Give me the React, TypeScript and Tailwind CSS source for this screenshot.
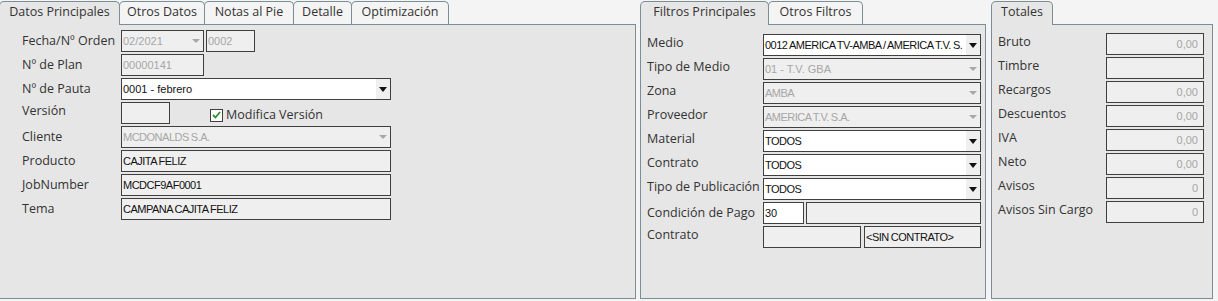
import clsx from "clsx";
import type { ReactNode } from "react";

const NARROW = "font-['Liberation_Sans',Arial,sans-serif] tracking-[-0.5px] [word-spacing:-0.5px]";
const PLAIN = "font-['Liberation_Sans',Arial,sans-serif]";

type BoxProps = {
  className: string;
  text?: string;
  white?: boolean;
  muted?: boolean;
  narrow?: boolean;
  right?: boolean;
  arrow?: "dark" | "light";
};

function Box({ className, text, white, muted, narrow, right, arrow }: BoxProps) {
  return (
    <div
      className={clsx(
        "flex h-[22px] shrink-0 items-center border border-[#3f3f3f]",
        white ? "bg-white" : "bg-[#efefef]",
        className,
      )}
    >
      <span
        className={clsx(
          "flex-1 overflow-hidden whitespace-nowrap pl-px text-[11px] leading-none",
          narrow ? NARROW : PLAIN,
          muted ? "text-[#a6a6a6]" : "text-[#111]",
          right && "pr-[5px] text-right",
        )}
      >
        {text}
      </span>
      {arrow === "dark" && (
        <span className="flex h-full w-[14px] items-center justify-center bg-[#efefef]">
          <svg width="8" height="5" viewBox="0 0 8 5">
            <polygon points="0,0 8,0 4,5" fill="#111" />
          </svg>
        </span>
      )}
      {arrow === "light" && (
        <span className="flex h-full w-[14px] items-center justify-center">
          <svg width="8" height="4" viewBox="0 0 8 4">
            <polygon points="0,0 8,0 4,4" fill="#a8a8a8" />
          </svg>
        </span>
      )}
    </div>
  );
}

function Row({ label, labelW, children, lift }: { label: string; labelW: string; children: ReactNode; lift?: boolean }) {
  return (
    <div className="flex h-[22px] items-center">
      <span className={clsx("shrink-0 whitespace-nowrap", labelW, lift && "-mt-[3px]")}>{label}</span>
      {children}
    </div>
  );
}

type Tab = { name: string; w: string; active?: boolean };

function Panel({ tabs, className, bodyClass, children }: { tabs: Tab[]; className: string; bodyClass: string; children: ReactNode }) {
  return (
    <div className={clsx("flex shrink-0 flex-col", className)}>
      <div className="flex h-[23px] items-start">
        {tabs.map((t, i) => (
          <div
            key={t.name}
            className={clsx(
              "flex items-center justify-center rounded-t-[5px] border border-b-0 border-[#7b8d96] pb-[2px]",
              i > 0 && "-ml-px",
              t.active ? "relative z-10 h-[24px] bg-[#e6e6e6]" : "h-[23px] bg-[#f4f4f4]",
              t.w,
            )}
          >
            {t.name}
          </div>
        ))}
      </div>
      <div className={clsx("flex h-[275px] flex-col gap-[2px] border border-[#7b8d96] bg-[#e6e6e6]", bodyClass)}>
        {children}
      </div>
    </div>
  );
}

function CheckBox() {
  return (
    <span className="flex h-[13px] w-[13px] items-center justify-center border border-[#3f3f3f] bg-white">
      <svg width="9" height="8" viewBox="0 0 9 8">
        <path d="M1 4 L3.5 6.5 L8 1" fill="none" stroke="#2f8f2f" strokeWidth="1.8" />
      </svg>
    </span>
  );
}

const MIDDLE = [
  { label: "Medio", text: "0012 AMERICA TV-AMBA / AMERICA T.V. S.", white: true, arrow: "dark" as const, narrow: true },
  { label: "Tipo de Medio", text: "01 - T.V. GBA", muted: true, arrow: "light" as const },
  { label: "Zona", text: "AMBA", muted: true, arrow: "light" as const, narrow: true },
  { label: "Proveedor", text: "AMERICA T.V. S.A.", muted: true, arrow: "light" as const, narrow: true },
  { label: "Material", text: "TODOS", white: true, arrow: "dark" as const, narrow: true },
  { label: "Contrato", text: "TODOS", white: true, arrow: "dark" as const, narrow: true },
  { label: "Tipo de Publicación", text: "TODOS", white: true, arrow: "dark" as const, narrow: true },
];

const TOTALES = [
  { label: "Bruto", value: "0,00" },
  { label: "Timbre", value: "" },
  { label: "Recargos", value: "0,00" },
  { label: "Descuentos", value: "0,00" },
  { label: "IVA", value: "0,00" },
  { label: "Neto", value: "0,00" },
  { label: "Avisos", value: "0" },
  { label: "Avisos Sin Cargo", value: "0" },
];

export default function App() {
  return (
    <div className="flex h-[301px] w-[1218px] bg-[#f4f4f4] pt-px font-['Open_Sans',sans-serif] text-[12.5px] text-[#333]">
      <Panel
        className="-ml-px mr-[4px] w-[637px]"
        bodyClass="pl-[22px] pt-[5px]"
        tabs={[
          { name: "Datos Principales", w: "w-[121px]", active: true },
          { name: "Otros Datos", w: "w-[86px]" },
          { name: "Notas al Pie", w: "w-[90px]" },
          { name: "Detalle", w: "w-[59px]" },
          { name: "Optimización", w: "w-[98px]" },
        ]}
      >
        <Row label="Fecha/Nº Orden" labelW="w-[99px]">
          <Box className="w-[83px]" text="02/2021" muted arrow="light" />
          <Box className="ml-[2px] w-[49px]" text="0002" muted />
        </Row>
        <Row label="Nº de Plan" labelW="w-[99px]">
          <Box className="w-[83px]" text="00000141" muted />
        </Row>
        <Row label="Nº de Pauta" labelW="w-[99px]">
          <Box className="w-[270px]" text="0001 - febrero" white arrow="dark" />
        </Row>
        <Row label="Versión" labelW="w-[99px]" lift>
          <Box className="w-[49px]" />
          <label className="ml-[40px] mt-[4px] flex items-center gap-[3px]">
            <CheckBox />
            <span>Modifica Versión</span>
          </label>
        </Row>
        <Row label="Cliente" labelW="w-[99px]">
          <Box className="w-[270px]" text="MCDONALDS S.A." muted narrow arrow="light" />
        </Row>
        <Row label="Producto" labelW="w-[99px]">
          <Box className="w-[270px]" text="CAJITA FELIZ" narrow />
        </Row>
        <Row label="JobNumber" labelW="w-[99px]">
          <Box className="w-[270px]" text="MCDCF9AF0001" narrow />
        </Row>
        <Row label="Tema" labelW="w-[99px]">
          <Box className="w-[270px]" text="CAMPANA CAJITA FELIZ" narrow />
        </Row>
      </Panel>

      <Panel
        className="mr-[5px] w-[346px]"
        bodyClass="pl-[6px] pt-[9px]"
        tabs={[
          { name: "Filtros Principales", w: "w-[129px]", active: true },
          { name: "Otros Filtros", w: "w-[95px]" },
        ]}
      >
        {MIDDLE.map((m) => (
          <Row key={m.label} label={m.label} labelW="w-[116px]" lift>
            <Box className="w-[218px]" text={m.text} white={m.white} muted={m.muted} narrow={m.narrow} arrow={m.arrow} />
          </Row>
        ))}
        <Row label="Condición de Pago" labelW="w-[116px]">
          <Box className="w-[41px]" text="30" white />
          <Box className="ml-[2px] w-[175px]" />
        </Row>
        <Row label="Contrato" labelW="w-[116px]" lift>
          <Box className="w-[98px]" />
          <Box className="ml-[3px] w-[117px]" text="<SIN CONTRATO>" narrow />
        </Row>
      </Panel>

      <Panel
        className="w-[222px]"
        bodyClass="pl-[6px] pt-[8px]"
        tabs={[{ name: "Totales", w: "w-[62px]", active: true }]}
      >
        {TOTALES.map((t) => (
          <Row key={t.label} label={t.label} labelW="w-[108px]" lift>
            <Box className="w-[98px]" text={t.value} muted right />
          </Row>
        ))}
      </Panel>
    </div>
  );
}
